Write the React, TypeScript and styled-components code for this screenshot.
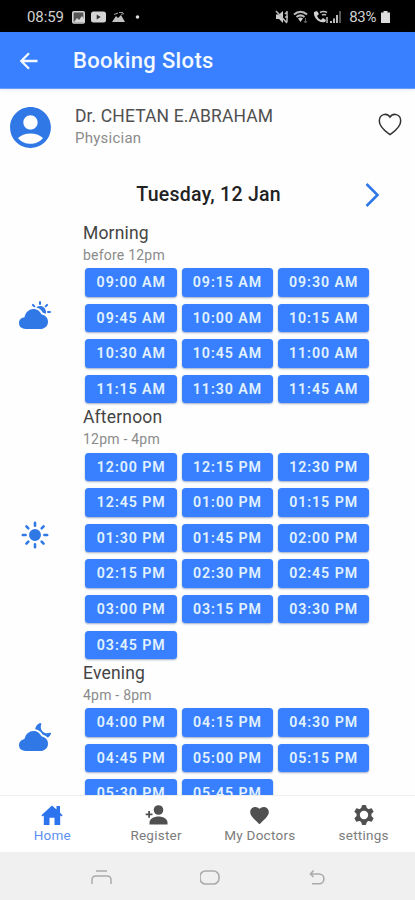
import React from "react";
import styled, { createGlobalStyle } from "styled-components";
import { IoPartlySunny, IoSunny, IoCloudyNight } from "react-icons/io5";
import { IoMdHeart } from "react-icons/io";
import { MdAccountCircle } from "react-icons/md";

const blue = "#3880ff";
const iconBlue = "#2f78e6";

const GlobalStyle = createGlobalStyle`
  * { box-sizing: border-box; }
  body { margin: 0; background: #fff; font-family: Roboto, sans-serif; }
`;

const Screen = styled.div`
  display: flex;
  flex-direction: column;
  width: 415px;
  height: 900px;
  overflow: hidden;
  background: #fefefe;
`;

const StatusBar = styled.div`
  display: flex;
  flex: none;
  align-items: center;
  justify-content: space-between;
  height: 32px;
  padding: 2px 25px 0 27px;
  background: #000;
  color: #d0d0d0;
  font-size: 15px;
`;

const StatusGroup = styled.div<{ $gap: number }>`
  display: flex;
  align-items: center;
  gap: ${(p) => p.$gap}px;
  svg { display: block; }
`;

const Clock = styled.span`
  letter-spacing: -0.1px;
  margin-right: 2px;
`;

const Battery = styled.span`
  letter-spacing: -0.4px;
  margin: 0 1px 0 3px;
`;

const Toolbar = styled.header`
  display: flex;
  flex: none;
  align-items: center;
  gap: 35px;
  height: 57px;
  padding: 1px 0 0 19px;
  background: ${blue};
  border-bottom: 1px solid #6b9df5;
  box-shadow: 0 1px 3px rgba(60, 100, 180, 0.15);
  color: #f3f9ff;
  svg { display: block; }
`;

const Title = styled.h1`
  margin: 0;
  font-size: 22px;
  font-weight: 500;
  letter-spacing: 0.35px;
`;

const Doctor = styled.section`
  display: flex;
  flex: none;
  align-items: center;
  height: 77px;
  padding: 0 12px 0 6px;
`;

const Avatar = styled(MdAccountCircle)`
  width: 49px;
  height: 49px;
  color: ${iconBlue};
`;

const DoctorText = styled.div`
  flex: 1;
  padding-left: 20px;
`;

const DoctorName = styled.div`
  height: 22px;
  line-height: 21px;
  font-size: 17.5px;
  letter-spacing: 0.12px;
  color: #505050;
`;

const Specialty = styled.div`
  height: 21px;
  line-height: 21px;
  font-size: 15px;
  letter-spacing: 0.25px;
  color: #8b8b8b;
`;

const DateBar = styled.div`
  display: flex;
  flex: none;
  align-items: center;
  justify-content: flex-end;
  gap: 84px;
  height: 53px;
  padding: 4px 34px 0 0;
  svg { display: block; }
`;

const DateLabel = styled.div`
  font-size: 19.5px;
  font-weight: 500;
  letter-spacing: 0.28px;
  color: #222;
`;

const Schedule = styled.main`
  flex: 1;
  min-height: 0;
  overflow: hidden;
`;

const Period = styled.section`
  display: grid;
  grid-template-columns: 83px 1fr;
`;

const PeriodIcon = styled.div`
  display: flex;
  align-items: center;
  justify-content: center;
  padding: 7px 14px 0 0;
  color: ${iconBlue};
`;

const PeriodHead = styled.div`
  height: 49.3px;
  padding-top: 3px;
`;

const PeriodName = styled.div`
  height: 22px;
  line-height: 23px;
  font-size: 17.5px;
  letter-spacing: 0.18px;
  color: #444;
`;

const PeriodHours = styled.div`
  height: 22px;
  line-height: 22px;
  font-size: 14px;
  letter-spacing: 0.22px;
  color: #8b8b8b;
`;

const Slots = styled.div`
  display: grid;
  grid-template-columns: repeat(3, 91.7px);
  grid-auto-rows: 28.4px;
  gap: 7.2px 4.5px;
  padding-left: 2.4px;
`;

const Slot = styled.button`
  border: 0;
  border-radius: 3.5px;
  padding: 0 0 0.5px;
  background: ${blue};
  color: #e2f2ff;
  font: 600 14.2px Roboto, sans-serif;
  letter-spacing: 0.95px;
  box-shadow: 0 1px 2px rgba(40, 70, 130, 0.45);
`;

const Tabs = styled.nav`
  display: grid;
  flex: none;
  grid-template-columns: repeat(4, 1fr);
  height: 57px;
  border-top: 1px solid #eeeeee;
  background: #fff;
`;

const Tab = styled.a<{ $active?: boolean }>`
  display: grid;
  grid-template-rows: 24px 20px;
  justify-items: center;
  align-items: center;
  align-content: start;
  padding: 7px 0 0 1px;
  color: ${(p) => (p.$active ? "#2c74ee" : "#505050")};
  svg { display: block; }
`;

const TabLabel = styled.span<{ $active?: boolean }>`
  height: 20px;
  line-height: 17px;
  font-size: 13.5px;
  letter-spacing: 0.25px;
  color: ${(p) => (p.$active ? "#5c91f2" : "#7c7c7c")};
`;

const SystemBar = styled.div`
  display: flex;
  flex: none;
  align-items: center;
  gap: 87px;
  height: 48px;
  padding: 3px 0 0 90px;
  background: #f0f0f0;
  svg { display: block; }
`;

const periods = [
  {
    name: "Morning",
    hours: "before 12pm",
    icon: <IoPartlySunny size={32} />,
    slots: ["09:00 AM", "09:15 AM", "09:30 AM", "09:45 AM", "10:00 AM", "10:15 AM", "10:30 AM", "10:45 AM", "11:00 AM", "11:15 AM", "11:30 AM", "11:45 AM"],
  },
  {
    name: "Afternoon",
    hours: "12pm - 4pm",
    icon: <IoSunny size={30} />,
    slots: ["12:00 PM", "12:15 PM", "12:30 PM", "12:45 PM", "01:00 PM", "01:15 PM", "01:30 PM", "01:45 PM", "02:00 PM", "02:15 PM", "02:30 PM", "02:45 PM", "03:00 PM", "03:15 PM", "03:30 PM", "03:45 PM"],
  },
  {
    name: "Evening",
    hours: "4pm - 8pm",
    icon: <IoCloudyNight size={32} />,
    slots: ["04:00 PM", "04:15 PM", "04:30 PM", "04:45 PM", "05:00 PM", "05:15 PM", "05:30 PM", "05:45 PM"],
  },
];

const HomeIcon = () => (
  <svg width="24" height="24" viewBox="0 0 24 24" fill="currentColor">
    <path d="M12 2.600 16.500 6.600V3H20v6.800l2.600 2.400-1 1.300-1.400-.9V22h-5.700v-7.200h-5V22H3.800v-9.400l-1.400.9-1-1.300z" />
  </svg>
);

const RegisterIcon = () => (
  <svg width="24" height="24" viewBox="0 0 24 24" fill="currentColor">
    <circle cx="14.500" cy="7" r="4.800" />
    <path d="M5.500 21.500v-2c0-4 5-6 9-6s9 2 9 6v2z" />
    <path d="M4.200 8h1.800v2.500h2.500v1.800H6v2.500H4.200v-2.500H1.700v-1.800h2.500z" />
  </svg>
);

const gearAngles = [0, 60, 120, 180, 240, 300];

const SettingsIcon = () => (
  <svg width="24" height="24" viewBox="0 0 24 24" fill="currentColor">
    {gearAngles.map((a) => (
      <path key={a} d="M10.300 2.500h3.400l1 5H9.300z" stroke="currentColor" strokeLinejoin="round" transform={`rotate(${a} 12 12)`} />
    ))}
    <circle cx="12" cy="12" r="7.500" />
    <circle cx="12" cy="12" r="4.200" fill="#fff" />
  </svg>
);

const tabs = [
  { label: "Home", icon: <HomeIcon />, active: true },
  { label: "Register", icon: <RegisterIcon /> },
  { label: "My Doctors", icon: <IoMdHeart size={23} /> },
  { label: "settings", icon: <SettingsIcon /> },
];

const NotificationIcons = () => (
  <>
    <svg width="13" height="13" viewBox="0 0 13 13">
      <rect x="0.8" y="0.8" width="11.4" height="11.2" rx="1" fill="#555" stroke="#d2d2d2" strokeWidth="1.6" />
      <path d="M2 11 5 7l2 2 3-4 2 3v3z" fill="#d8d8d8" />
    </svg>
    <svg width="15" height="12" viewBox="0 0 15 12">
      <rect y="0.5" width="15" height="11" rx="2.5" fill="#d4d4d4" />
      <path d="M5.7 3.500v5l4-2.500z" fill="#333" />
    </svg>
    <svg width="13" height="12" viewBox="0 0 13 12">
      <path d="M0 11 4 5l2 2 3-3 4 7z" fill="#c2c2c2" />
      <path d="M2 3.5 6 2M7 1.5h4M9 3.5l3-1" stroke="#999" strokeWidth="1.2" />
    </svg>
    <svg width="14" height="12" viewBox="0 0 14 12">
      <circle cx="6.500" cy="6" r="1.800" fill="#ddd" />
    </svg>
  </>
);

const SignalIcons = () => (
  <>
    <svg width="14" height="14" viewBox="0 0 14 14">
      <path d="M1 4.5h3L8 1v12L4 9H1z" fill="#ccc" />
      <path d="M1 1 12 13M10 4l2-2M10 7h3M12 1v11" stroke="#bbb" strokeWidth="1.5" />
    </svg>
    <svg width="16" height="14" viewBox="0 0 16 14">
      <path d="M1 4.5C5 1 10 1 14 4.5M3.5 7C6 5 9 5 11.5 7" fill="none" stroke="#bbb" strokeWidth="2.1" />
      <path d="m5 8.5 2.5 3.5L10 8.5Q7.500 6.500 5 8.500" fill="#ccc" />
      <path d="M12.500 8v5m-1.500-2 1.500 2 1.500-2" stroke="#666" fill="none" />
    </svg>
    <svg width="29" height="14" viewBox="0 0 29 14">
      <path d="M1 2 4 1l2 3-2 2c1 2 2 3 4 4l2-2 3 2-1 2C6 14 0 7 1 2" fill="#d2d2d2" />
      <path d="M7 2.500q3.500-2 7 0M9 5q2-1 4 0M14 7v6" stroke="#bbb" strokeWidth="1.500" fill="none" />
      <path d="M17 11h2v2h-2zM20 8.500h2V13h-2zM23 5h2v8h-2z" fill="#bbb" />
      <path d="M26 1h2v12h-2z" fill="#555" />
    </svg>
  </>
);

export default function App() {
  return (
    <>
      <GlobalStyle />
      <Screen>
        <StatusBar>
          <StatusGroup $gap={6}>
            <Clock>08:59</Clock>
            <NotificationIcons />
          </StatusGroup>
          <StatusGroup $gap={4}>
            <SignalIcons />
            <Battery>83%</Battery>
            <svg width="9" height="12" viewBox="0 0 9 12">
              <path d="M2.500 0h4v1.500H9V12H0V1.500h2.500z" fill="#ddd" />
            </svg>
          </StatusGroup>
        </StatusBar>
        <Toolbar>
          <svg width="19" height="18" viewBox="0 0 19 18" fill="none" stroke="currentColor" strokeWidth="2.300">
            <path d="M18.500 9H2.500M10 1.300 2.300 9l7.700 7.700" />
          </svg>
          <Title>Booking Slots</Title>
        </Toolbar>
        <Doctor>
          <Avatar />
          <DoctorText>
            <DoctorName>Dr. CHETAN E.ABRAHAM</DoctorName>
            <Specialty>Physician</Specialty>
          </DoctorText>
          <svg width="26" height="34" viewBox="0 0 26 34" fill="none" stroke="#333" strokeWidth="1.500">
            <path d="M13 23.600C9 20.600 2.300 16.500 2.300 10 2.300 2.800 10 1.500 13 6.200c3-4.700 10.700-3.400 10.700 3.800C23.700 16.500 17 20.600 13 23.600z" />
          </svg>
        </Doctor>
        <DateBar>
          <DateLabel>Tuesday, 12 Jan</DateLabel>
          <svg width="16" height="25" viewBox="0 0 16 25" fill="none" stroke={iconBlue} strokeWidth="2.600">
            <path d="m1.500 2 11 11-11 11" />
          </svg>
        </DateBar>
        <Schedule>
          {periods.map((p) => (
            <Period key={p.name}>
              <PeriodIcon>{p.icon}</PeriodIcon>
              <div>
                <PeriodHead>
                  <PeriodName>{p.name}</PeriodName>
                  <PeriodHours>{p.hours}</PeriodHours>
                </PeriodHead>
                <Slots>
                  {p.slots.map((s) => (
                    <Slot key={s}>{s}</Slot>
                  ))}
                </Slots>
              </div>
            </Period>
          ))}
        </Schedule>
        <Tabs>
          {tabs.map((t) => (
            <Tab key={t.label} $active={t.active}>
              {t.icon}
              <TabLabel $active={t.active}>{t.label}</TabLabel>
            </Tab>
          ))}
        </Tabs>
        <SystemBar>
          <svg width="23" height="17" viewBox="0 0 23 17" fill="none" stroke="#aaa" strokeWidth="1.500">
            <path d="M6 2h11M2 15v-4q0-4 4-4h11q4 0 4 4v4" />
          </svg>
          <svg width="20" height="15" viewBox="0 0 20 15" fill="none" stroke="#aaa" strokeWidth="1.600">
            <rect x="0" y="1" width="19" height="13" rx="5.500" />
          </svg>
          <svg width="18" height="17" viewBox="0 0 18 17" fill="none" stroke="#aaa" strokeWidth="1.600">
            <path d="M6.500 1.500 3.500 5l3 3M3.500 5H12a4.700 4.700 0 0 1 0 9.800H5" />
          </svg>
        </SystemBar>
      </Screen>
    </>
  );
}
